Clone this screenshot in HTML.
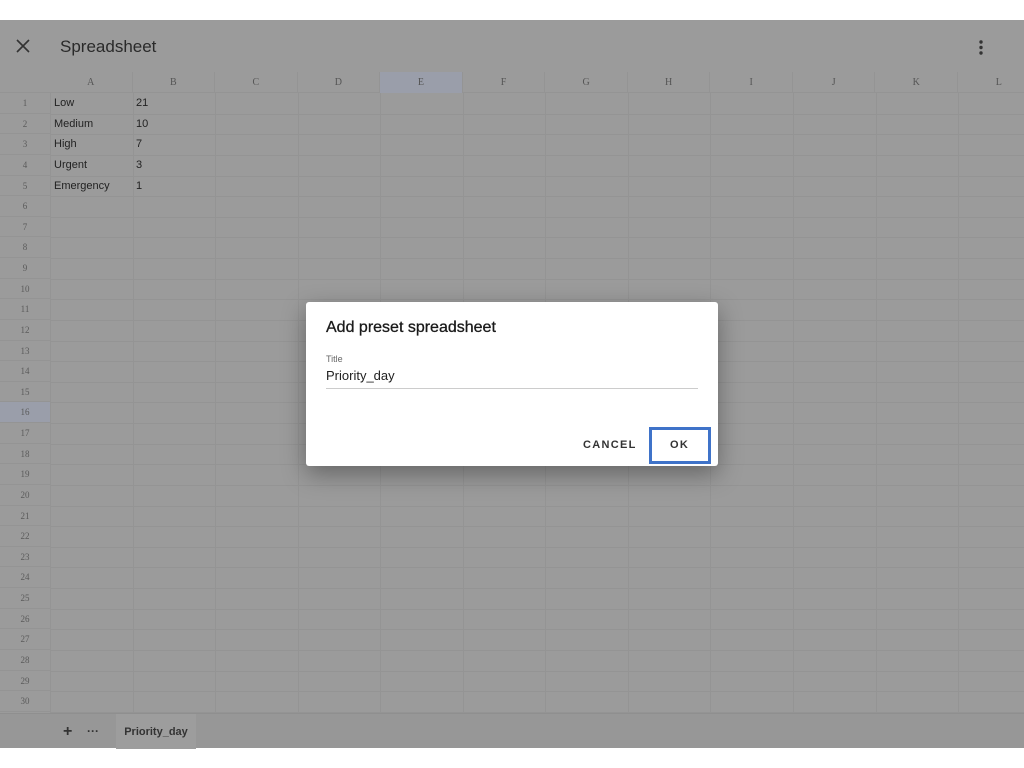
<!DOCTYPE html>
<html><head><meta charset="utf-8"><style>
*{margin:0;padding:0;box-sizing:border-box}
body{width:1024px;height:768px;background:#fff;position:relative;overflow:hidden;font-family:"Liberation Sans",sans-serif}
#app{position:absolute;left:0;top:20px;width:1024px;height:728px;background:#9b9b9b}
.t{position:absolute;left:60px;top:17px;font-size:17px;color:#2a2a2a}
.x{position:absolute;left:16px;top:19px}
.dots{position:absolute;left:978px;top:20px}
.ch{position:absolute;top:52px;height:21px;font-family:"Liberation Serif",serif;font-size:10px;color:#555;text-align:center;line-height:21px;border-right:1px solid #949494}
.rh{position:absolute;left:0;width:50px;font-family:"Liberation Serif",serif;font-size:9px;color:#5a5a5a;text-align:center;border-bottom:1px solid #949494}
.hl{background:#9a9eaa}
.vl{position:absolute;top:73px;width:1px;height:620px;background:#949494}
.hlz{position:absolute;left:50px;width:974px;height:1px;background:#949494}
.c{position:absolute;font-size:11px;color:#222}
#tabs{position:absolute;left:0;top:693px;width:1024px;height:35px;background:#979797;border-top:1px solid #8f8f8f}
.tab{position:absolute;left:116px;top:0;width:80px;height:35px;background:#9d9d9d;font-size:11px;font-weight:bold;color:#333;text-align:center;line-height:36px}
#dlg{position:absolute;left:306px;top:302px;width:412px;height:164px;background:#fff;border-radius:3px;box-shadow:0 8px 24px rgba(0,0,0,.35)}
</style></head><body>
<div id="app">
<svg class="x" width="14" height="14" viewBox="0 0 14 14"><path d="M1 1L13 13M13 1L1 13" stroke="#333" stroke-width="1.6"/></svg>
<div class="t">Spreadsheet</div>
<svg class="dots" width="6" height="16"><circle cx="3" cy="2" r="1.7" fill="#333"/><circle cx="3" cy="7.5" r="1.7" fill="#333"/><circle cx="3" cy="13" r="1.7" fill="#333"/></svg>
<div style="position:absolute;left:0;top:52px;width:1024px;height:21px;border-bottom:1px solid #949494"></div>
<div id="grid"></div>
<div id="tabs"><span style="position:absolute;left:63px;top:9px;font-size:16px;font-weight:bold;color:#333">+</span><span style="position:absolute;left:87px;top:10px;font-size:12px;font-weight:bold;color:#333">···</span><div class="tab">Priority_day</div></div>
</div>
<div id="dlg">
<div style="position:absolute;left:20px;top:17px;font-size:16px;color:#1a1a1a;-webkit-text-stroke:0.3px #1a1a1a">Add preset spreadsheet</div>
<div style="position:absolute;left:20px;top:52px;font-size:9px;color:#666">Title</div>
<div style="position:absolute;left:20px;top:66px;font-size:13px;color:#222">Priority_day</div>
<div style="position:absolute;left:20px;top:86px;width:372px;height:1px;background:#ccc"></div>
<div style="position:absolute;left:277px;top:137px;font-size:11px;font-weight:bold;letter-spacing:1.3px;color:#333">CANCEL</div>
<div style="position:absolute;left:343px;top:125px;width:62px;height:37px;border:3px solid #3f73c9"></div>
<div style="position:absolute;left:364px;top:137px;font-size:11px;font-weight:bold;letter-spacing:1.3px;color:#333">OK</div>
</div>
<script>
var g=document.getElementById('grid'),h='';
var cols='ABCDEFGHIJKL',cw=82.55;
for(var i=0;i<12;i++){var x=50+i*cw;h+='<div class="ch'+(i==4?' hl':'')+'" style="left:'+x+'px;width:'+cw+'px">'+cols[i]+'</div>';h+='<div class="vl" style="left:'+(x+cw)+'px"></div>'}
h+='<div class="vl" style="left:50px"></div>';
var rh=20.63;
for(var r=0;r<30;r++){var y=73+r*rh;h+='<div class="rh'+(r==15?' hl':'')+'" style="top:'+y+'px;height:'+rh+'px;line-height:'+rh+'px">'+(r+1)+'</div>';h+='<div class="hlz" style="top:'+(y+rh)+'px"></div>'}
var d=[['Low',21],['Medium',10],['High',7],['Urgent',3],['Emergency',1]];
for(var r=0;r<5;r++){var y=73+r*rh+4;h+='<div class="c" style="left:54px;top:'+y+'px">'+d[r][0]+'</div><div class="c" style="left:136px;top:'+y+'px">'+d[r][1]+'</div>'}
g.innerHTML=h;
</script>
</body></html>
